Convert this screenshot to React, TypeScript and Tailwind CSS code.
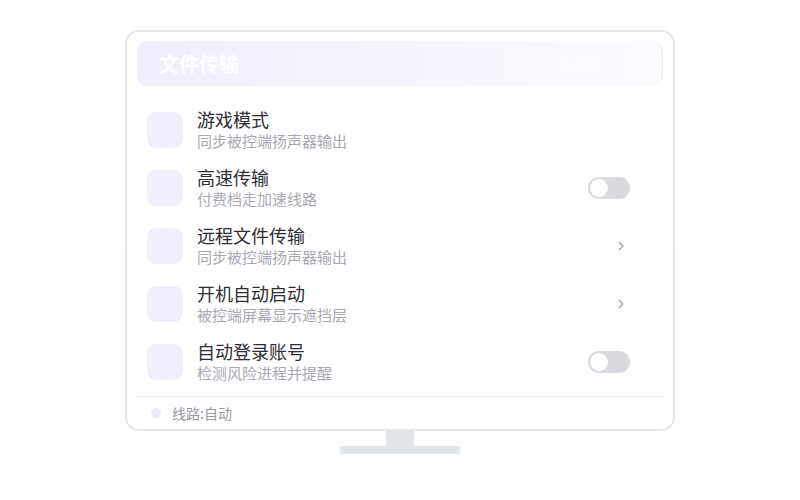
import * as React from "react";

const items = [
  { title: "游戏模式", desc: "同步被控端扬声器输出", action: "none" },
  { title: "高速传输", desc: "付费档走加速线路", action: "toggle" },
  { title: "远程文件传输", desc: "同步被控端扬声器输出", action: "arrow" },
  { title: "开机自动启动", desc: "被控端屏幕显示遮挡层", action: "arrow" },
  { title: "自动登录账号", desc: "检测风险进程并提醒", action: "toggle" },
];

const font = { fontFamily: '"Noto Sans CJK SC", "Noto Sans", sans-serif' };

function Toggle() {
  return (
    <div className="w-[42px] h-[22px] rounded-full bg-[#d8dadf] p-[2px] flex items-center">
      <div className="w-[18px] h-[18px] rounded-full bg-white" />
    </div>
  );
}

function Chevron() {
  return (
    <svg width="10" height="12" viewBox="0 0 10 12" fill="none" className="mr-[4px]">
      <path d="M3.5 2.5 L7 6 L3.5 9.5" stroke="#9ca3af" strokeWidth="1.4" strokeLinecap="round" strokeLinejoin="round" />
    </svg>
  );
}

export default function App() {
  return (
    <div
      className="w-[800px] h-[500px] bg-[linear-gradient(to_bottom,#ffffff_50%,#fdfdfd_50%)] flex flex-col items-center pt-[30px]"
      style={font}
    >
      <div className="w-[550px] h-[401px] border-2 border-[#e4e6ea] rounded-[14px] bg-white px-[10px] pt-[9px] flex flex-col overflow-hidden">
        <div className="shrink-0 h-[45px] rounded-[10px] bg-[linear-gradient(to_right,#f0eefc,#f6f5fe_55%,#fbfbfe)] pl-[22px] pr-[10px] flex items-center justify-between border-r border-[#ececf2]">
          <span className="text-white text-[20px] font-bold leading-none">文件传输</span>
          <span className="text-white/60 text-[14px] leading-none mr-[52px]">文件传输</span>
        </div>

        <div className="shrink-0 mt-[15px] flex flex-col">
          {items.map((it) => (
            <div key={it.title} className="h-[58px] flex items-center pl-[10px] pr-[33px]">
              <div className="w-[36px] h-[36px] rounded-[9px] bg-[#f1effc]" />
              <div className="ml-[14px] flex-1 flex flex-col pt-[2px]">
                <span className="text-[18px] leading-[20px] text-[#2e2e33]">{it.title}</span>
                <span className="text-[15px] leading-[24px] text-[#a8a8b0]">{it.desc}</span>
              </div>
              {it.action === "toggle" && <Toggle />}
              {it.action === "arrow" && <Chevron />}
            </div>
          ))}
        </div>

        <div className="shrink-0 mt-[5px] h-[33px] border-t border-[#f0f0f2] flex items-center pl-[14px]">
          <div className="w-[10px] h-[10px] rounded-full bg-[#ebe9fb]" />
          <span className="ml-[11px] text-[14px] text-[#9a9aa2]">线路:自动</span>
        </div>
      </div>
      <div className="w-[28px] h-[15px] bg-[#e2e5e9]" />
      <div className="w-[120px] h-[8px] bg-[#e2e5e9]" />
    </div>
  );
}
